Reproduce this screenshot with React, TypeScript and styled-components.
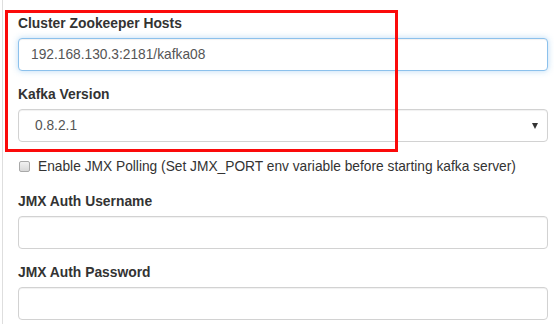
import React from "react";
import styled, { createGlobalStyle } from "styled-components";

const Global = createGlobalStyle`
  html, body { margin: 0; padding: 0; background: #fff; }
  body { font-family: "Liberation Sans", Arial, Helvetica, sans-serif; font-size: 13.75px; color: #333; }
  * { box-sizing: border-box; }
`;

const Page = styled.div`
  position: relative;
  margin-left: 2px;
  border-left: 1px solid #dedede;
  padding: 13px 6px 0 15px;
  height: 324px;
  overflow: hidden;
`;

const Group = styled.div<{ $gap?: number }>`
  display: flex;
  flex-direction: column;
  margin-bottom: ${(p) => p.$gap ?? 13}px;
`;

const Label = styled.label`
  font-weight: bold;
  font-size: 13.85px;
  line-height: 20px;
  margin-bottom: 5px;
  color: #333;
`;

const Input = styled.div<{ $focus?: boolean }>`
  height: 33px;
  border: 1px solid ${(p) => (p.$focus ? "#8cc1ec" : "#d2d2d2")};
  border-radius: 4px;
  padding: 0 12px;
  display: flex;
  align-items: center;
  color: #555;
  background: #fff;
  box-shadow: ${(p) =>
    p.$focus
      ? "inset 0 1px 1px rgba(0,0,0,.06), 0 0 6px rgba(102,175,233,.45)"
      : "inset 0 1px 1px rgba(0,0,0,.06)"};
`;

const Select = styled(Input)`
  padding: 0 9px 0 16px;
  justify-content: space-between;
`;

const Arrow = styled.span`
  width: 0;
  height: 0;
  border-left: 3px solid transparent;
  border-right: 3px solid transparent;
  border-top: 6px solid #333;
  margin-top: 1px;
`;

const CheckRow = styled.div`
  display: flex;
  align-items: center;
  height: 20px;
  margin: 14px 0 15px 1px;
  color: #333;
`;

const Box = styled.span`
  width: 11px;
  height: 11px;
  border: 1px solid #a9a9a9;
  border-radius: 2px;
  background: linear-gradient(#f1f1f1, #d8d8d8);
  margin-right: 8px;
  margin-top: 1px;
`;

const Highlight = styled.div`
  position: absolute;
  left: 2px;
  top: 10px;
  width: 393px;
  height: 142px;
  border: 3px solid #fb0a0a;
  pointer-events: none;
`;

export default function App() {
  return (
    <>
      <Global />
      <Page>
        <Group>
          <Label>Cluster Zookeeper Hosts</Label>
          <Input $focus>192.168.130.3:2181/kafka08</Input>
        </Group>
        <Group $gap={0}>
          <Label>Kafka Version</Label>
          <Select>
            <span>0.8.2.1</span>
            <Arrow />
          </Select>
        </Group>
        <CheckRow>
          <Box />
          Enable JMX Polling (Set JMX_PORT env variable before starting kafka server)
        </CheckRow>
        <Group>
          <Label>JMX Auth Username</Label>
          <Input />
        </Group>
        <Group>
          <Label>JMX Auth Password</Label>
          <Input />
        </Group>
        <Highlight />
      </Page>
    </>
  );
}
